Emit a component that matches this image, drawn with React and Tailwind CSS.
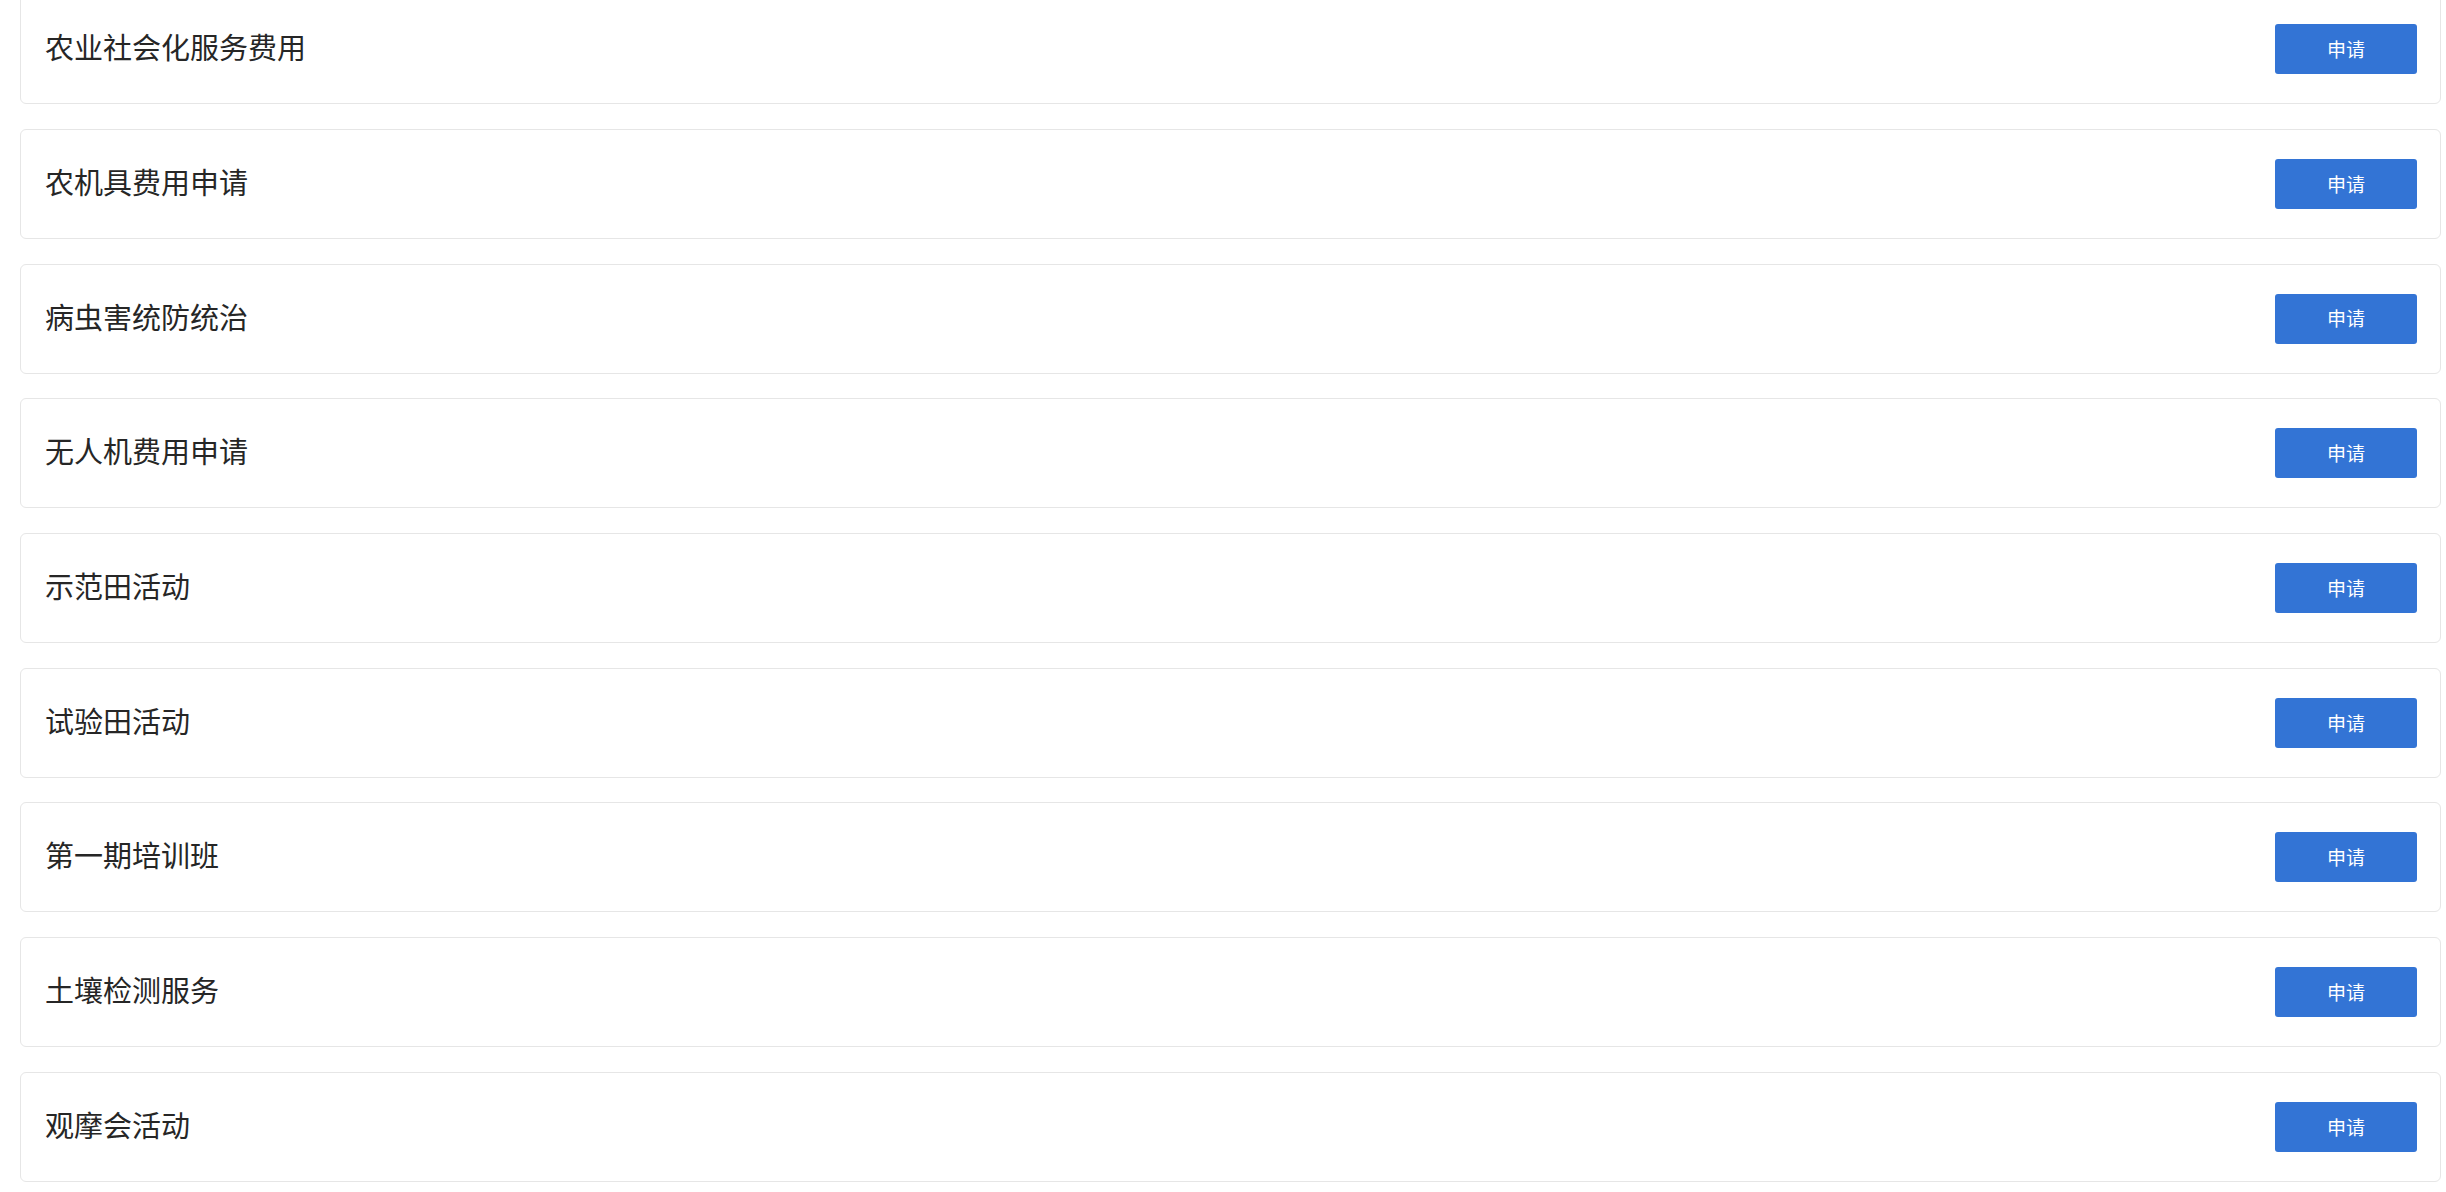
const items = [
  "农业社会化服务费用",
  "农机具费用申请",
  "病虫害统防统治",
  "无人机费用申请",
  "示范田活动",
  "试验田活动",
  "第一期培训班",
  "土壤检测服务",
  "观摩会活动",
];

export default function App() {
  return (
    <div
      className="min-h-screen bg-white pl-[20px] pr-[5px]"
      style={{ fontFamily: '"Noto Sans CJK SC", "Noto Sans", sans-serif' }}
    >
      <div className="mt-[-5.7px] flex flex-col gap-[24.7px]">
        {items.map((name) => (
          <div
            key={name}
            className="flex h-[110px] items-center justify-between rounded-[6px] border border-[#e6e6e6] bg-white pl-6 pr-[23px]"
          >
            <span className="mb-[5px] text-[29px] leading-none text-[#262626]">{name}</span>
            <button className="flex h-[50px] w-[142px] items-center justify-center rounded-[3px] bg-[#3374d5] text-[19px] text-white">
              申请
            </button>
          </div>
        ))}
      </div>
    </div>
  );
}
